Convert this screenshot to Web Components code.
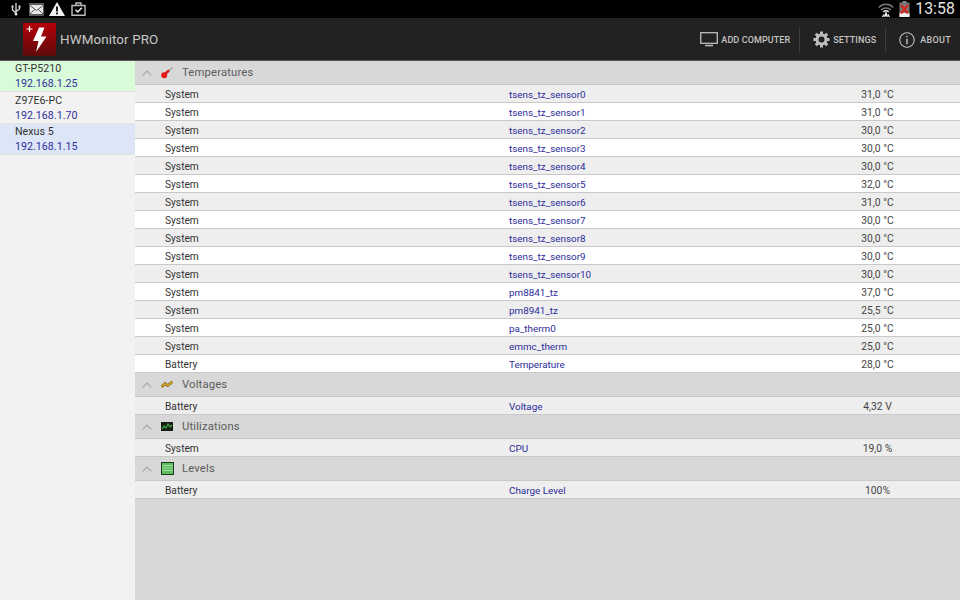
<!DOCTYPE html>
<html>
<head>
<meta charset="utf-8">
<title>HWMonitor PRO</title>
<style>
html, body { margin: 0; padding: 0; height: 100%; overflow: hidden; }
body { font-family: Roboto, "Liberation Sans", sans-serif; background: #d8d8d8; }
</style>
</head>
<body>
<hw-app></hw-app>

<script>
class StatusBar extends HTMLElement {
    constructor() {
        super();
        this.shadowDOM = this.attachShadow({mode: 'open'});
    }
    connectedCallback() {
        this.shadowDOM.innerHTML = `
        <style>
        :host { display: flex; align-items: center; height: 18px; background: #000; color: #e4e4e4; }
        .left { display: flex; align-items: center; gap: 5px; padding-left: 10px; }
        .right { display: flex; align-items: center; margin-left: auto; padding-right: 5px; }
        svg { display: block; }
        .usb { margin-right: 2px; }
        .clip { margin-left: 1px; }
        .time { font-size: 15.800px; line-height: 18px; margin-left: 5px; letter-spacing: .1px; }
        .batt { margin-left: 5px; }
        </style>
        <div class="left">
            <svg class="usb" width="12" height="14" viewBox="0 0 12 14"><path d="M6 1v12M6 11 2.500 8V5M6 9.500 9.500 7V5" fill="none" stroke="#ddd" stroke-width="1.300"/><rect x="1.500" y="3.500" width="2" height="2" fill="#ddd"/><rect x="8.500" y="3.500" width="2" height="2" fill="#ddd"/><circle cx="6" cy="12" r="1.500" fill="#ddd"/></svg>
            <svg width="15" height="13" viewBox="0 0 15 13"><rect width="15" height="13" fill="#5a5a5a"/><rect x="1" y="2" width="13" height="9" fill="#e8e8e8"/><path d="M1 2.500 7.500 7.500 14 2.500M1 11 5.500 6.500M14 11 9.500 6.500" fill="none" stroke="#555" stroke-width="1"/></svg>
            <svg width="16" height="14" viewBox="0 0 16 14"><path d="M8 0 16 14H0Z" fill="#f2f2f2"/><rect x="7.100" y="4.500" width="1.800" height="5" fill="#000"/><rect x="7.100" y="10.500" width="1.800" height="1.800" fill="#000"/></svg>
            <svg class="clip" width="15" height="14" viewBox="0 0 15 14"><path d="M1 3.500h13v9.800H1z" fill="none" stroke="#bbb" stroke-width="1.400"/><path d="M5 3.500V1h5v2.500" fill="none" stroke="#bbb" stroke-width="1.400"/><path d="M4.500 7.800 6.800 10 10.800 5.800" fill="none" stroke="#eee" stroke-width="1.500"/></svg>
        </div>
        <div class="right">
            <svg width="16" height="15" viewBox="0 0 16 15"><path d="M.7 5.500A10 10 0 0 1 15.300 5.500M3 8A7 7 0 0 1 13 8" fill="none" stroke="#777" stroke-width="1.500"/><path d="M5.200 10A4 4 0 0 1 10.800 10" fill="none" stroke="#ddd" stroke-width="1.500"/><path d="M6.700 15 8 10.800 9.300 15M4.500 15 6 12.500M11.500 15 10 12.500" fill="none" stroke="#eee" stroke-width="1.400"/></svg>
            <svg class="batt" width="11" height="16" viewBox="0 0 10 16"><rect x="3" width="4" height="2" fill="#888"/><rect y="1.500" width="10" height="14.500" fill="#777"/><rect y="12" width="10" height="4" fill="#f2f2f2"/><path d="M1.500 4 8.500 12.500M8.500 4 1.500 12.500" stroke="#d8261c" stroke-width="2.200"/></svg>
            <span class="time">13:58</span>
        </div>`;
    }
}

class ActionItem extends HTMLElement {
    constructor() {
        super();
        this.shadowDOM = this.attachShadow({mode: 'open'});
    }
    connectedCallback() {
        this.shadowDOM.innerHTML = `
        <style>
        :host { display: flex; align-items: center; gap: var(--item-gap, 3px); height: 27px; color: #c4c4c4;
            font-size: 9px; font-weight: 500; letter-spacing: var(--item-ls, .1px); }
        ::slotted(svg) { display: block; }
        </style>
        <slot name="icon"></slot><span>${this.getAttribute('label')}</span>`;
    }
}

class ActionBar extends HTMLElement {
    constructor() {
        super();
        this.shadowDOM = this.attachShadow({mode: 'open'});
    }
    connectedCallback() {
        this.shadowDOM.innerHTML = `
        <style>
        :host { display: flex; align-items: center; height: 43px; background: #222; box-sizing: border-box;
            border-bottom: 1px solid #555; padding: 1px 0 0 23px; }
        .logo { display: block; flex: none; }
        h1 { margin: 0 0 0 4px; font-size: 13.400px; font-weight: 400; color: #c8c8c8; letter-spacing: .1px; }
        .actions { display: flex; align-items: center; margin-left: auto; padding-right: 9px; }
        .sep { width: 1px; height: 24px; background: #3d3d3d; margin: 0 13px 0 9px; }
        </style>
        <svg class="logo" width="33" height="33" viewBox="0 0 33 33">
            <defs><linearGradient id="lg" x1="0" y1="0" x2="0" y2="1"><stop offset="0" stop-color="#b50007"/><stop offset="1" stop-color="#5e0a0c"/></linearGradient></defs>
            <rect width="33" height="33" fill="url(#lg)"/>
            <path d="M3.500 6h6M6.500 3v6" stroke="#fff" stroke-width="1.200"/>
            <path d="M16 4.500 10 18h5.500L13 29 23.500 13.500H18L21.500 4.500Z" fill="#fff"/>
        </svg>
        <h1>HWMonitor PRO</h1>
        <div class="actions">
            <action-item label="ADD COMPUTER">
                <svg slot="icon" width="18" height="15" viewBox="0 0 18 15"><rect x=".7" y=".7" width="16.600" height="10.600" fill="none" stroke="#bdbdbd" stroke-width="1.300"/><rect x="5" y="12.800" width="8" height="1.500" fill="#bdbdbd"/></svg>
            </action-item>
            <div class="sep"></div>
            <action-item label="SETTINGS">
                <svg slot="icon" width="17" height="17" viewBox="0 0 17 17"><circle cx="8.500" cy="8.500" r="4.500" fill="none" stroke="#bdbdbd" stroke-width="3"/><path d="M8.500 .5v4M8.500 12.500v4M.5 8.500h4M12.500 8.500h4M2.800 2.800l2.800 2.800M11.400 11.400l2.800 2.800M14.200 2.800l-2.800 2.800M5.600 11.400l-2.800 2.800" stroke="#bdbdbd" stroke-width="3"/><circle cx="8.500" cy="8.500" r="2.500" fill="#222"/></svg>
            </action-item>
            <div class="sep"></div>
            <action-item label="ABOUT" style="--item-gap:5px;--item-ls:.3px">
                <svg slot="icon" width="16" height="16" viewBox="0 0 16 16"><circle cx="8" cy="8" r="7.200" fill="none" stroke="#bdbdbd" stroke-width="1.100"/><rect x="7.300" y="6.800" width="1.400" height="5.500" fill="#c8c8c8"/><rect x="7.300" y="3.800" width="1.400" height="1.500" fill="#c8c8c8"/></svg>
            </action-item>
        </div>`;
    }
}

class DeviceItem extends HTMLElement {
    constructor() {
        super();
        this.shadowDOM = this.attachShadow({mode: 'open'});
    }
    connectedCallback() {
        this.shadowDOM.innerHTML = `
        <style>
        :host { display: flex; flex-direction: column; justify-content: center; box-sizing: border-box;
            height: var(--h, 31px); padding-left: 15px; background: var(--bg, #f2f2f2); border-bottom: 1px solid #e2e2e2;
            font-size: 10.600px; line-height: 15px; letter-spacing: .05px; }
        .name { color: #333; }
        .ip { color: #2f2f9e; }
        </style>
        <span class="name">${this.getAttribute('name')}</span>
        <span class="ip">${this.getAttribute('ip')}</span>`;
    }
}

class GroupHeader extends HTMLElement {
    constructor() {
        super();
        this.shadowDOM = this.attachShadow({mode: 'open'});
    }
    connectedCallback() {
        this.shadowDOM.innerHTML = `
        <style>
        :host { display: flex; align-items: center; box-sizing: border-box; height: 24px; background: #d8d8d8;
            border-bottom: 1px solid #c8c8c8; padding-left: 7px; font-size: 11.300px; color: #5c5c5c; letter-spacing: .15px; }
        .chev { display: block; margin-right: 8px; }
        .icon { width: 14px; display: flex; justify-content: center; margin-right: 8px; }
        ::slotted(svg) { display: block; }
        </style>
        <svg class="chev" width="10" height="6" viewBox="0 0 10 6"><path d="M.7 5.300 5 1 9.300 5.300" fill="none" stroke="#a4a4a4" stroke-width="1.100"/></svg>
        <div class="icon"><slot></slot></div>
        <span>${this.getAttribute('title')}</span>`;
    }
}

class SensorRow extends HTMLElement {
    constructor() {
        super();
        this.shadowDOM = this.attachShadow({mode: 'open'});
    }
    connectedCallback() {
        this.shadowDOM.innerHTML = `
        <style>
        :host { display: grid; grid-template-columns: 344px 351px 1fr; align-items: center; box-sizing: border-box;
            height: 18px; padding: 2px 0 0 30px; border-bottom: 1px solid #c8c8c8; background: var(--row, #fff);
            font-size: 10.200px; }
        .src { color: #333; }
        .name { color: #2c2c9c; font-size: 9.900px; }
        .val { color: #444; width: 35px; white-space: nowrap; display: flex; justify-content: center; font-size: 10.300px; }
        </style>
        <span class="src">${this.getAttribute('source')}</span>
        <span class="name">${this.getAttribute('sensor')}</span>
        <span class="val">${this.getAttribute('value')}</span>`;
    }
}

class HwApp extends HTMLElement {
    constructor() {
        super();
        this.shadowDOM = this.attachShadow({mode: 'open'});
    }
    connectedCallback() {
        const groups = [
            ['Temperatures', '<svg width="12" height="12" viewBox="0 0 12 12"><path d="M11.500 .5 6 5.500" stroke="#999" stroke-width="1.200"/><path d="M8 3.500 4.500 6.500" stroke="#d81818" stroke-width="2.400"/><circle cx="3.200" cy="8.300" r="3" fill="#e01818"/></svg>', [
                ['System', 'tsens_tz_sensor0', '31,0 °C'], ['System', 'tsens_tz_sensor1', '31,0 °C'],
                ['System', 'tsens_tz_sensor2', '30,0 °C'], ['System', 'tsens_tz_sensor3', '30,0 °C'],
                ['System', 'tsens_tz_sensor4', '30,0 °C'], ['System', 'tsens_tz_sensor5', '32,0 °C'],
                ['System', 'tsens_tz_sensor6', '31,0 °C'], ['System', 'tsens_tz_sensor7', '30,0 °C'],
                ['System', 'tsens_tz_sensor8', '30,0 °C'], ['System', 'tsens_tz_sensor9', '30,0 °C'],
                ['System', 'tsens_tz_sensor10', '30,0 °C'], ['System', 'pm8841_tz', '37,0 °C'],
                ['System', 'pm8941_tz', '25,5 °C'], ['System', 'pa_therm0', '25,0 °C'],
                ['System', 'emmc_therm', '25,0 °C'], ['Battery', 'Temperature', '28,0 °C']]],
            ['Voltages', '<svg width="12" height="7" viewBox="0 0 12 7"><path d="M.5 6 4 2.500 6.500 4.500 11.500 .8" fill="none" stroke="#6b5520" stroke-width="2.600"/><path d="M.5 6 4 2.500 6.500 4.500 11.500 .8" fill="none" stroke="#e0a820" stroke-width="1.500"/></svg>', [['Battery', 'Voltage', '4,32 V']]],
            ['Utilizations', '<svg width="12" height="9" viewBox="0 0 12 9"><rect width="12" height="9" fill="#141c14"/><path d="M1 7 3 4 5 6 7 2 9 5 11 3" fill="none" stroke="#3fa83f" stroke-width="1.200"/></svg>', [['System', 'CPU', '19,0 %']]],
            ['Levels', '<svg width="13" height="13" viewBox="0 0 13 13"><rect x=".5" y=".5" width="12" height="12" fill="#5cbb5c" stroke="#1c3a1c"/><path d="M1 3.500h11M1 6h11M1 8.500h11" stroke="#a4dca4" stroke-width="1"/></svg>', [['Battery', 'Charge Level', '100%']]]
        ];
        const body = groups.map(([title, icon, rows]) => {
            const rowHtml = rows.map((r, i) =>
                `<sensor-row source="${r[0]}" sensor="${r[1]}" value="${r[2]}" style="--row:${i % 2 ? '#fff' : '#eeeeee'}"></sensor-row>`).join('');
            return `<group-header title="${title}">${icon}</group-header>${rowHtml}`;
        }).join('');

        this.shadowDOM.innerHTML = `
        <style>
        :host { display: flex; flex-direction: column; height: 600px; }
        .main { flex: 1; display: flex; min-height: 0; }
        .side { width: 135px; flex: none; background: #f2f2f2; }
        .content { flex: 1; background: #d8d8d8; }
        </style>
        <status-bar></status-bar>
        <action-bar></action-bar>
        <div class="main">
            <div class="side">
                <device-item name="GT-P5210" ip="192.168.1.25" style="--bg:#d9fbd9"></device-item>
                <device-item name="Z97E6-PC" ip="192.168.1.70" style="--h:32px"></device-item>
                <device-item name="Nexus 5" ip="192.168.1.15" style="--bg:#dce6f6"></device-item>
            </div>
            <div class="content">${body}</div>
        </div>`;
    }
}

customElements.define('status-bar', StatusBar);
customElements.define('action-item', ActionItem);
customElements.define('action-bar', ActionBar);
customElements.define('device-item', DeviceItem);
customElements.define('group-header', GroupHeader);
customElements.define('sensor-row', SensorRow);
customElements.define('hw-app', HwApp);
</script>
</body>
</html>
